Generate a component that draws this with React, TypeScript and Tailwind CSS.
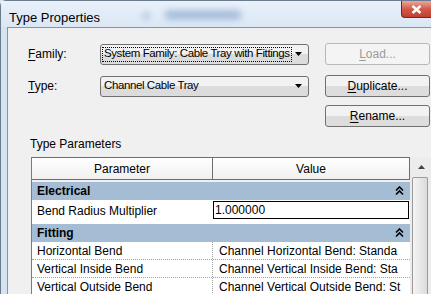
import React from 'react';

const font = { fontFamily: '"Liberation Sans", Arial, sans-serif' };

const Caret: React.FC = () => (
  <svg width="7" height="4" viewBox="0 0 7 4" className="shrink-0">
    <path d="M0 0h7L3.5 4z" fill="#000" />
  </svg>
);

const DoubleUp: React.FC = () => (
  <svg width="9" height="10" viewBox="0 0 9 10">
    <path d="M1 4.5L4.5 1L8 4.5M1 8.5L4.5 5L8 8.5" stroke="#000" strokeWidth="1.6" fill="none" />
  </svg>
);

const Combo: React.FC<{ text: string; focused?: boolean }> = ({ text, focused }) => (
  <div className="w-[209px] h-[21px] flex items-center rounded-[3px] border border-[#707070] bg-gradient-to-b from-[#f2f2f2] from-50% to-[#dcdcdc] to-50% pl-[1px] pr-[6px]">
    <div className="flex-1 flex">
      <div
        className={`h-[15px] flex items-center px-[1px] whitespace-nowrap text-[11.5px] tracking-[-0.4px] text-black ${
          focused ? 'border border-dotted border-black' : 'border border-transparent'
        }`}
      >
        {text}
      </div>
    </div>
    <div className="w-[12px] flex justify-end">
      <Caret />
    </div>
  </div>
);

const Button: React.FC<{ label: string; ul: string; disabled?: boolean }> = ({ label, ul, disabled }) => (
  <div
    className={`w-[105px] h-[22px] flex items-center justify-center rounded-[3px] border text-[12px] ${
      disabled
        ? 'border-[#b5b9bc] bg-[#f4f4f4] text-[#9a9a9a]'
        : 'border-[#707070] bg-gradient-to-b from-[#f2f2f2] from-50% to-[#dddddd] to-50% text-black'
    }`}
  >
    <span>
      <span className="underline underline-offset-2">{ul}</span>
      {label}
    </span>
  </div>
);

const GroupRow: React.FC<{ name: string }> = ({ name }) => (
  <div className="h-[18px] flex items-center justify-between bg-[#a5bcd5] pl-[5px] pr-[6px] text-[12px] font-bold text-black">
    <span>{name}</span>
    <DoubleUp />
  </div>
);

const ParamRow: React.FC<{ name: string; value: string }> = ({ name, value }) => (
  <div className="h-[18px] flex bg-white border-b border-dotted border-[#a0a0a0] text-[12px] text-black">
    <div className="w-[181px] pl-[5px] flex items-center border-r border-dotted border-[#a0a0a0] whitespace-nowrap overflow-hidden">
      {name}
    </div>
    <div className="flex-1 pl-[6px] flex items-center whitespace-nowrap overflow-hidden">{value}</div>
  </div>
);

export default function App() {
  return (
    <div className="w-[431px] h-[294px] overflow-hidden flex flex-col bg-[#dfe3e8]" style={font}>
      {/* desktop behind the dialog */}
      <div className="h-[5px] relative overflow-hidden bg-[#e2e5ea]">
        <div className="absolute left-[95px] top-0 w-[5px] h-[5px] bg-[#5b6f93]" />
        <div className="absolute left-[134px] top-0 w-[11px] h-[3px] bg-[#4f7fc0]" />
        <div className="absolute left-[166px] top-0 w-[112px] h-[3px] bg-[#6a6a6a] blur-[1px]" />
      </div>

      {/* dialog window */}
      <div className="flex-1 flex flex-col rounded-tl-[6px] border-t border-l border-[#6b7b8e] bg-[#d6e4f2]">
        {/* title bar */}
        <div className="h-[26px] flex items-start bg-gradient-to-b from-[#e9f1fa] to-[#dbe7f4] relative">
          <div className="pl-[8px] pt-[7px] text-[13px] text-black">Type Properties</div>
          <div className="absolute left-[140px] top-[10px] w-[10px] h-[10px] rounded-sm bg-[#c8d8ec] blur-[2px]" />
          <div className="absolute left-[164px] top-[9px] w-[76px] h-[10px] rounded bg-[#a9bfdc] blur-[3px]" />
          <div className="ml-auto w-[30px] h-[17px] rounded-bl-[4px] border border-r-0 border-t-0 border-[#6b2a22] bg-gradient-to-b from-[#eaa89a] via-[#d2584a] to-[#c43e2e] flex items-center justify-center">
            <svg width="11" height="9" viewBox="0 0 11 9">
              <path d="M1.5 1L9.5 8M9.5 1L1.5 8" stroke="#fff" strokeWidth="2.4" />
            </svg>
          </div>
        </div>

        {/* client area */}
        <div className="flex-1 ml-[6px] border-t border-l border-[#8794a4] bg-[#f0f0f0] pt-[15px] text-[12px] text-black">
          <div className="flex items-center">
            <div className="w-[92px] pl-[20px] text-[12px]">
              <span className="underline underline-offset-2">F</span>amily:
            </div>
            <Combo text="System Family: Cable Tray with Fittings" focused />
            <div className="ml-[16px]">
              <Button ul="L" label="oad..." disabled />
            </div>
          </div>

          <div className="flex items-center mt-[10px]">
            <div className="w-[92px] pl-[20px] text-[12px]">
              <span className="underline underline-offset-2">T</span>ype:
            </div>
            <Combo text="Channel Cable Tray" />
            <div className="ml-[16px]">
              <Button ul="D" label="uplicate..." />
            </div>
          </div>

          <div className="flex mt-[8px] pl-[317px]">
            <Button ul="R" label="ename..." />
          </div>

          <div className="pl-[22px] mt-[8px] text-[12px]">Type Parameters</div>

          {/* parameter grid */}
          <div className="flex ml-[23px] mt-[4px]">
            <div className="w-[380px] flex flex-col border-l border-[#7a7a7a]">
              <div className="h-[23px] flex border-y border-[#6e6e6e] bg-gradient-to-b from-white to-[#f0f0f0]">
                <div className="w-[181px] flex items-center justify-center border-r border-[#6e6e6e]">Parameter</div>
                <div className="flex-1 flex items-center justify-center border-r border-[#6e6e6e]">Value</div>
              </div>
              <div className="h-[2px] bg-[#f0f0f0]" />
              <GroupRow name="Electrical" />
              <div className="h-[24px] flex bg-white text-[12px]">
                <div className="w-[181px] pl-[5px] pt-[2px] flex items-start">Bend Radius Multiplier</div>
                <div className="flex-1 pt-[1px] pr-[1px]">
                  <div className="h-[18px] border border-black flex items-center pl-[1px]">1.000000</div>
                </div>
              </div>
              <GroupRow name="Fitting" />
              <ParamRow name="Horizontal Bend" value="Channel Horizontal Bend: Standa" />
              <ParamRow name="Vertical Inside Bend" value="Channel Vertical Inside Bend: Sta" />
              <ParamRow name="Vertical Outside Bend" value="Channel Vertical Outside Bend: St" />
            </div>

            {/* scrollbar */}
            <div className="w-[21px] flex flex-col bg-[#ececec] pl-[1px]">
              <div className="h-[20px] flex items-center justify-center">
                <svg width="7" height="4" viewBox="0 0 7 4">
                  <path d="M0 4L3.5 0L7 4z" fill="#444" />
                </svg>
              </div>
              <div className="flex-1 ml-[1px] w-[16px] rounded-t-[2px] border border-b-0 border-[#9a9a9a] bg-gradient-to-r from-[#f4f4f4] to-[#dcdcdc]" />
            </div>
          </div>
        </div>
      </div>
    </div>
  );
}
